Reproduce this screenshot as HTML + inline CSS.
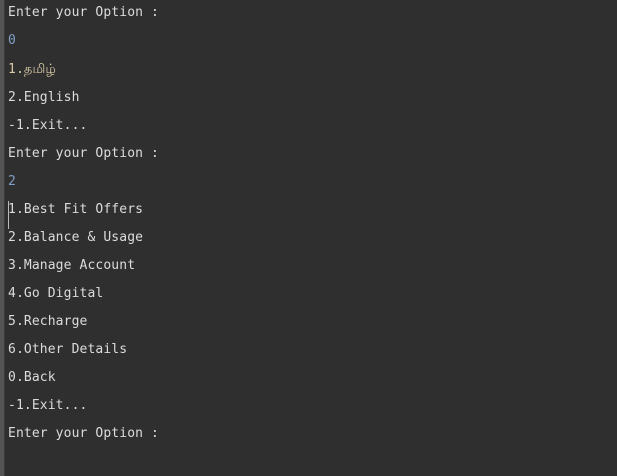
<!DOCTYPE html>
<html><head><meta charset="utf-8"><style>
html,body{margin:0;padding:0;width:617px;height:476px;overflow:hidden;background:#2f2f2f}
.strip{position:absolute;left:0;top:0;width:4px;height:476px;background:#555}
.strip2{position:absolute;left:4px;top:0;width:1px;height:476px;background:#3a3a3a}
pre{position:absolute;left:8px;top:-1px;margin:0;font-family:"DejaVu Sans Mono","Liberation Mono","Noto Sans CJK JP",monospace;font-size:13px;letter-spacing:0.12px;line-height:28px;color:#dcdcdc}
.in{color:#7f9fc4}
.cur{position:absolute;left:8px;top:201px;width:1px;height:28px;background:#bbb}
</style></head><body>
<div class="strip"></div><div class="strip2"></div>
<pre>Enter your Option :
<span class="in">0</span>
<span style="color:#d9c9a8">1.</span><span style="color:#d9c9a8;font-family:'Liberation Sans',sans-serif">தமிழ்</span>
2.English
-1.Exit...
Enter your Option :
<span class="in">2</span>
1.Best Fit Offers
2.Balance &amp; Usage
3.Manage Account
4.Go Digital
5.Recharge
6.Other Details
0.Back
-1.Exit...
Enter your Option :</pre>
<div class="cur"></div>
</body></html>
